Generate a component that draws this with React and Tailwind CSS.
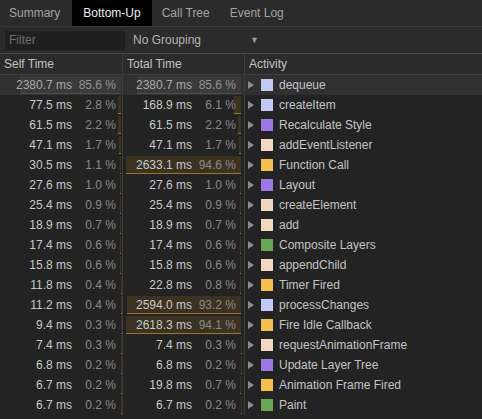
import React from 'react';

const COLORS = {
    script: 'bg-[#c2c9f5]',
    style: 'bg-[#9b78e3]',
    dom: 'bg-[#efd7c1]',
    event: 'bg-[#f3c04f]',
    paint: 'bg-[#68a653]',
};

const rows = [
    ['2380.7', '85.6', '2380.7', '85.6', 'dequeue', 'script'],
    ['77.5', '2.8', '168.9', '6.1', 'createItem', 'script'],
    ['61.5', '2.2', '61.5', '2.2', 'Recalculate Style', 'style'],
    ['47.1', '1.7', '47.1', '1.7', 'addEventListener', 'dom'],
    ['30.5', '1.1', '2633.1', '94.6', 'Function Call', 'event'],
    ['27.6', '1.0', '27.6', '1.0', 'Layout', 'style'],
    ['25.4', '0.9', '25.4', '0.9', 'createElement', 'dom'],
    ['18.9', '0.7', '18.9', '0.7', 'add', 'dom'],
    ['17.4', '0.6', '17.4', '0.6', 'Composite Layers', 'paint'],
    ['15.8', '0.6', '15.8', '0.6', 'appendChild', 'dom'],
    ['11.8', '0.4', '22.8', '0.8', 'Timer Fired', 'event'],
    ['11.2', '0.4', '2594.0', '93.2', 'processChanges', 'script'],
    ['9.4', '0.3', '2618.3', '94.1', 'Fire Idle Callback', 'event'],
    ['7.4', '0.3', '7.4', '0.3', 'requestAnimationFrame', 'dom'],
    ['6.8', '0.2', '6.8', '0.2', 'Update Layer Tree', 'style'],
    ['6.7', '0.2', '19.8', '0.7', 'Animation Frame Fired', 'event'],
    ['6.7', '0.2', '6.7', '0.2', 'Paint', 'paint'],
];

const TimeCell = ({ ms, pct, selected, pad, barRight, barMax }) => (
    <div className={`relative flex items-center justify-end border-r border-[#3d3d3d] ${pad}`}>
        <div
            className={`absolute top-[1px] bottom-[1px] border-b ${selected ? 'bg-[#3a3a3a] border-[#4e4e4e]' : 'bg-[#3b3222] border-[#9a7628]'}`}
            style={{ right: barRight, width: (parseFloat(pct) / 100) * barMax }}
        />
        <span className={`relative ${selected ? 'text-[#a9a9a9]' : 'text-[#c9c9c9]'}`}>{ms} ms</span>
        <span className={`relative w-[44px] text-right ${selected ? 'text-[#939393]' : 'text-[#8a8a8a]'}`}>{pct} %</span>
    </div>
);

const App = () => {
    return (
        <div
            className="w-[482px] h-[419px] overflow-hidden bg-[#232323] text-[12px] leading-none"
            style={{ fontFamily: '"Liberation Sans", Arial, sans-serif' }}
        >
            <div className="flex h-[27px] bg-[#2b2b2b] border-b border-[#3a3a3a]">
                <div className="flex items-center pl-[9px] pr-[12px] text-[#a3a3a3]">Summary</div>
                <div className="flex items-center px-[11px] bg-black text-[#ececec]">Bottom-Up</div>
                <div className="flex items-center px-[10px] text-[#a3a3a3]">Call Tree</div>
                <div className="flex items-center px-[10px] text-[#a3a3a3]">Event Log</div>
            </div>

            <div className="flex items-center h-[27px] bg-[#2b2b2b] border-b border-[#4a4a4a]">
                <div className="ml-[5px] w-[120px] h-[19px] bg-[#1f1f1f] flex items-center pl-[4px] text-[#6f6f6f]">
                    Filter
                </div>
                <div className="ml-[8px] w-[126px] flex items-center justify-between text-[#b3b3b3]">
                    <span>No Grouping</span>
                    <span className="text-[9px] text-[#9a9a9a]">▼</span>
                </div>
            </div>

            <div className="grid grid-cols-[123px_122px_1fr] h-[21px] bg-[#2b2b2b] border-b border-[#3d3d3d] text-[#c2c2c2]">
                <div className="flex items-center pl-[4px] border-r border-[#3d3d3d]">Self Time</div>
                <div className="flex items-center pl-[4px] border-r border-[#3d3d3d]">Total Time</div>
                <div className="flex items-center pl-[4px]">Activity</div>
            </div>

            {rows.map(([sMs, sPct, tMs, tPct, name, kind], i) => {
                const selected = i === 0;
                return (
                    <div
                        key={name + i}
                        className={`grid grid-cols-[123px_122px_1fr] h-[20px] ${selected ? 'bg-[#303030]' : ''}`}
                    >
                        <TimeCell ms={sMs} pct={sPct} selected={selected} pad="pr-[6px]" barRight={1} barMax={118} />
                        <TimeCell ms={tMs} pct={tPct} selected={selected} pad="pr-[8px]" barRight={3} barMax={122} />
                        <div className="flex items-center pl-[3px]">
                            <svg width="6" height="8" viewBox="0 0 6 8" className="shrink-0">
                                <path d="M0 0 L6 4 L0 8 Z" fill="#8c8c8c" />
                            </svg>
                            <span className={`ml-[7px] w-[12px] h-[12px] shrink-0 ${COLORS[kind]}`} />
                            <span className="ml-[6px] text-[#c4c4c4] whitespace-nowrap">{name}</span>
                        </div>
                    </div>
                );
            })}
        </div>
    );
};

export default App;
